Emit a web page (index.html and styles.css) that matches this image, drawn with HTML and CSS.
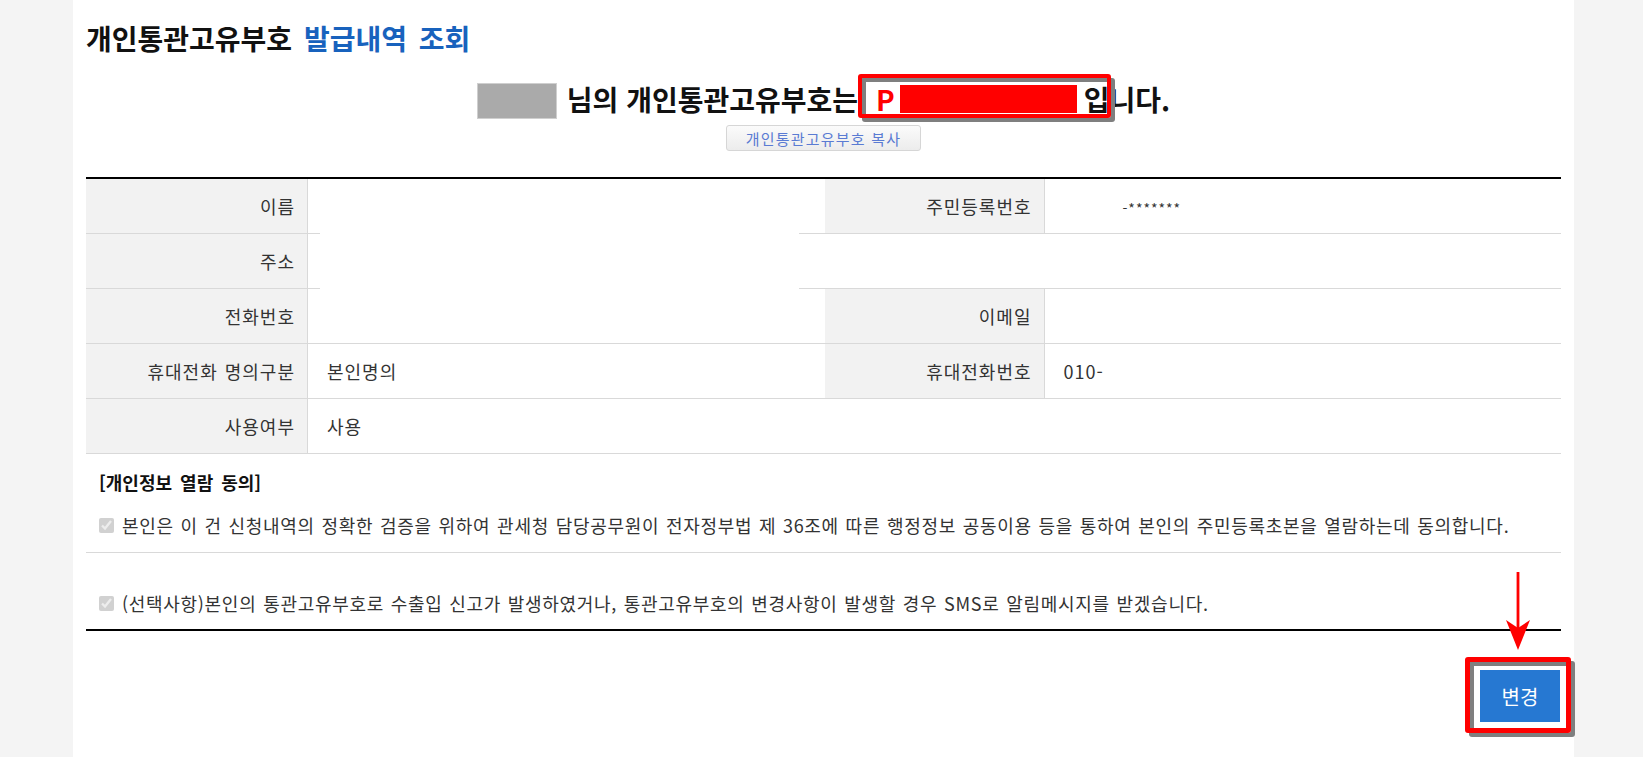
FILE: index.html
```html
<!DOCTYPE html>
<html lang="ko">
<head>
    <meta charset="UTF-8">
    <meta name="viewport" content="width=device-width, initial-scale=1.0">
    <title>개인통관고유부호 발급내역 조회</title>
    <link rel="stylesheet" href="styles.css">
</head>
<body>

    <div class="page">
        <h1 class="title">개인통관고유부호 <span class="point">발급내역 조회</span></h1>

        <!-- 발급 결과 -->
        <div class="holder">
            <span class="name-mask"></span>
            <span class="holder-txt">님의 개인통관고유부호는</span>
            <span class="code">
                <span class="code-p">P</span>
                <span class="redact"></span>
                <span class="callout callout-code"></span>
            </span>
            <span class="holder-end">입니다.</span>
        </div>

        <div class="copy-area">
            <button type="button" class="copy-btn">개인통관고유부호 복사</button>
        </div>

        <!-- 신청인 정보 -->
        <div class="table-wrap">
            <table class="info">
                <colgroup>
                    <col class="col-th">
                    <col class="col-td">
                    <col class="col-th2">
                    <col class="col-td">
                </colgroup>
                <tr>
                    <th>이름</th>
                    <td></td>
                    <th>주민등록번호</th>
                    <td><span class="rrn">-*******</span></td>
                </tr>
                <tr>
                    <th>주소</th>
                    <td colspan="3"></td>
                </tr>
                <tr>
                    <th>전화번호</th>
                    <td></td>
                    <th>이메일</th>
                    <td></td>
                </tr>
                <tr>
                    <th>휴대전화 명의구분</th>
                    <td>본인명의</td>
                    <th>휴대전화번호</th>
                    <td>010-</td>
                </tr>
                <tr>
                    <th>사용여부</th>
                    <td colspan="3">사용</td>
                </tr>
            </table>
            <div class="info-mask"></div>
        </div>

        <!-- 개인정보 동의 -->
        <div class="agree">
            <h3 class="agree-title">[개인정보 열람 동의]</h3>
            <p class="agree-row agree-first">
                <input type="checkbox" checked disabled>
                <span>본인은 이 건 신청내역의 정확한 검증을 위하여 관세청 담당공무원이 전자정부법 제 36조에 따른 행정정보 공동이용 등을 통하여 본인의 주민등록초본을 열람하는데 동의합니다.</span>
            </p>
            <p class="agree-row agree-second">
                <input type="checkbox" checked disabled>
                <span>(선택사항)본인의 통관고유부호로 수출입 신고가 발생하였거나, 통관고유부호의 변경사항이 발생할 경우 SMS로 알림메시지를 받겠습니다.</span>
            </p>
        </div>

        <div class="btn-area">
            <div class="btn-wrap">
                <svg class="arrow" width="24" height="78" viewBox="0 0 24 78">
                    <rect x="10.6" y="0" width="2.8" height="58" fill="#f00"/>
                    <path d="M0 48 L12 56 L24 48 L12 78 Z" fill="#f00"/>
                </svg>
                <button type="button" class="btn-change">변경</button>
                <span class="callout callout-btn"></span>
            </div>
        </div>
    </div>

</body>
</html>
```

FILE: styles.css
```css
/* 기본 */
* {
    box-sizing: border-box;
}

body {
    margin: 0;
    padding-left: 4px;
    background: #f4f4f4;
    font-family: "Noto Sans CJK KR", "Noto Sans", sans-serif;
    color: #333;
}

.page {
    width: 1501px;
    min-height: 100vh;
    margin: 0 auto;
    padding: 19px 13px 0;
    background: #fff;
}

.title {
    margin: 0;
    font-size: 28px;
    line-height: 38px;
    font-weight: 700;
    word-spacing: 4px;
    color: #111;
}

.title .point {
    color: #1862bd;
}

/* 발급 결과 */
.holder {
    display: flex;
    justify-content: center;
    align-items: center;
    height: 36px;
    margin-top: 26px;
    font-size: 28px;
    font-weight: 700;
    color: #111;
}

.name-mask {
    width: 80px;
    height: 36px;
    background: #aaa;
    border: 1px solid #cfcfcf;
}

.holder-txt {
    margin-left: 10px;
    margin-bottom: 4px;
}

.code {
    position: relative;
    display: flex;
    align-items: center;
    height: 36px;
    margin-left: 13px;
}

.code-p {
    margin: 0 0 4px 5px;
    color: #f00;
}

.redact {
    width: 177px;
    height: 28px;
    margin: 0 0 5px 5px;
    background: #f00;
}

.holder-end {
    margin-left: 7px;
    margin-bottom: 4px;
}

/* 주석 박스 */
.callout {
    position: absolute;
    border: 4px solid #f00;
    border-radius: 3px;
    box-shadow: 4px 4px 0 #7f7f7f, inset 4px 4px 0 #7f7f7f;
    z-index: 2;
}

.callout-code {
    top: -9px;
    left: -13px;
    width: 253px;
    height: 44px;
}

.copy-area {
    display: flex;
    justify-content: center;
    margin-top: 6px;
}

.copy-btn {
    width: 195px;
    height: 26px;
    padding: 0;
    border: 1px solid #d6d6d6;
    border-radius: 3px;
    background: linear-gradient(#fbfbfb, #ececec);
    font-family: inherit;
    font-size: 15px;
    letter-spacing: 1.2px;
    color: #5a7bd3;
}

/* 신청인 정보 */
.table-wrap {
    position: relative;
    margin-top: 26px;
}

.info {
    width: 100%;
    table-layout: fixed;
    border-collapse: separate;
    border-spacing: 0;
    border-top: 2px solid #000;
    font-size: 18px;
    letter-spacing: 1px;
    word-spacing: 1px;
}

.col-th {
    width: 222px;
}

.col-th2 {
    width: 220px;
}

.info th,
.info td {
    height: 55px;
    border-bottom: 1px solid #d9d9d9;
    font-weight: 400;
    color: #333;
}

.info th {
    padding: 0 12px;
    text-align: right;
    background: #f2f2f2;
    border-right: 1px solid #d9d9d9;
}

.info td {
    padding: 0 19px;
}

.rrn {
    margin-left: 59px;
    font-size: 14px;
    letter-spacing: 1px;
}

/* 개인정보 가림 */
.info-mask {
    position: absolute;
    top: 3px;
    left: 234px;
    width: 479px;
    height: 162px;
    background: #fff;
}

/* 개인정보 동의 */
.agree {
    border-bottom: 2px solid #000;
}

.agree-title {
    margin: 16px 0 0;
    padding: 0 13px;
    font-size: 18px;
    line-height: 24px;
    font-weight: 700;
    word-spacing: 3px;
    color: #111;
}

.agree-row {
    display: flex;
    align-items: center;
    margin: 0;
    padding: 0 13px;
    font-size: 18px;
    line-height: 24px;
    letter-spacing: 0.7px;
    word-spacing: 1px;
}

.agree-row input {
    width: 15px;
    height: 15px;
    margin: 0 8px 0 0;
}

.agree-first {
    margin-top: 19px;
    padding-bottom: 15px;
    border-bottom: 1px solid #d9d9d9;
}

.agree-second {
    padding-top: 38px;
    padding-bottom: 14px;
}

/* 변경 버튼 */
.btn-area {
    display: flex;
    justify-content: flex-end;
    margin-top: 39px;
    padding-right: 1px;
}

.btn-wrap {
    position: relative;
}

.btn-change {
    display: block;
    width: 80px;
    height: 52px;
    border: none;
    background: #2678d2;
    font-family: inherit;
    font-size: 20px;
    color: #fff;
}

.callout-btn {
    top: -13px;
    left: -15px;
    width: 106px;
    height: 76px;
    border-width: 5px;
}

.arrow {
    position: absolute;
    top: -98px;
    left: 26px;
    z-index: 3;
}
```
